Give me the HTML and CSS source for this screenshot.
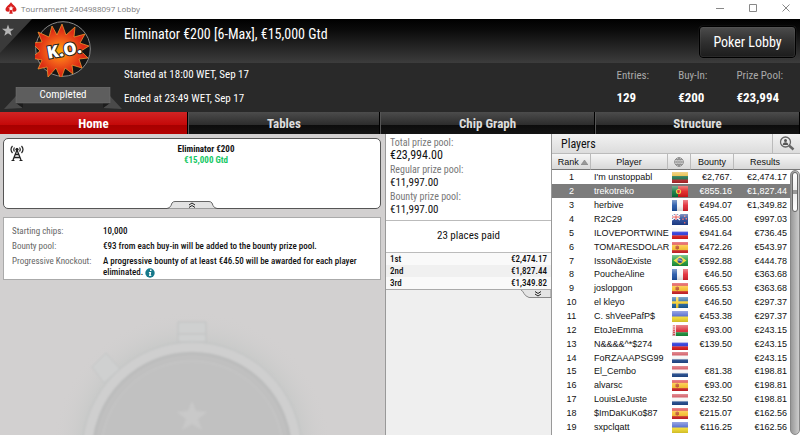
FILE: index.html
```html
<!DOCTYPE html>
<html lang="en">
<head>
<meta charset="UTF-8">
<meta name="viewport" content="width=device-width, initial-scale=1.0">
<title>Tournament 2404988097 Lobby</title>
<link rel="stylesheet" href="styles.css">
</head>
<body>

<!-- flags -->
<svg class="defs" aria-hidden="true">
  <linearGradient id="gloss" x1="0" y1="0" x2="0" y2="1">
    <stop offset="0" stop-color="#fff" stop-opacity=".45"/>
    <stop offset=".5" stop-color="#fff" stop-opacity=".1"/>
    <stop offset="1" stop-color="#000" stop-opacity=".15"/>
  </linearGradient>
  <symbol id="lt" viewBox="0 0 16 11"><path fill="#e8b52c" d="M0 0h16v4H0z"/><path fill="#1d7048" d="M0 4h16v4H0z"/><path fill="#b8282c" d="M0 7.5h16V11H0z"/><path fill="url(#gloss)" d="M0 0h16v11H0z"/></symbol>
  <symbol id="pt" viewBox="0 0 16 11"><path fill="#e01818" d="M0 0h16v11H0z"/><path fill="#08743a" d="M0 0h6v11H0z"/><circle cx="6.5" cy="5.5" r="2.6" fill="#e9cf3a"/><path fill="#d22" d="M5.2 4h2.6v2.2L6.5 7.5 5.2 6.2z"/><path fill="url(#gloss)" d="M0 0h16v11H0z"/></symbol>
  <symbol id="fr" viewBox="0 0 16 11"><path fill="#f4f4f4" d="M0 0h16v11H0z"/><path fill="#1b50a4" d="M0 0h5v11H0z"/><path fill="#e0202c" d="M11 0h5v11h-5z"/><path fill="url(#gloss)" d="M0 0h16v11H0z"/></symbol>
  <symbol id="nz" viewBox="0 0 16 11"><path fill="#1d3f91" d="M0 0h16v11H0z"/><path stroke="#fff" stroke-width="1.5" d="M0 0l8 6M8 0L0 6"/><path stroke="#fff" stroke-width="2" d="M4 0v6M0 3h8"/><path stroke="#d22" d="M4 0v6M0 3h8"/><path fill="#e66" d="M12 1.5h1.4v1.4H12zM10.3 4.5h1.4v1.4h-1.4zM13.6 4h1.4v1.4h-1.4zM12 8h1.4v1.4H12z"/><path fill="url(#gloss)" d="M0 0h16v11H0z"/></symbol>
  <symbol id="ru" viewBox="0 0 16 11"><path fill="#f4f4f4" d="M0 0h16v4H0z"/><path fill="#2434d8" d="M0 3.6h16v4H0z"/><path fill="#e41c1c" d="M0 7.4h16V11H0z"/><path fill="url(#gloss)" d="M0 0h16v11H0z"/></symbol>
  <symbol id="es" viewBox="0 0 16 11"><path fill="#d9252a" d="M0 0h16v11H0z"/><path fill="#f8c02c" d="M0 2.8h16v5.4H0z"/><path fill="#c0522a" d="M3.5 4h1v3h-1zM6 4h1v3H6zM4.5 3.5H6v4H4.5z"/><path fill="url(#gloss)" d="M0 0h16v11H0z"/></symbol>
  <symbol id="br" viewBox="0 0 16 11"><path fill="#1f9a3c" d="M0 0h16v11H0z"/><path fill="#f2dc2c" d="M8 1l6.5 4.5L8 10 1.5 5.5z"/><circle cx="8" cy="5.5" r="2.5" fill="#23408e"/><path stroke="#dfe8f5" stroke-width=".7" fill="none" d="M5.7 5q2.5-.5 4.6 1.3"/><path fill="url(#gloss)" d="M0 0h16v11H0z"/></symbol>
  <symbol id="se" viewBox="0 0 16 11"><path fill="#1c62a0" d="M0 0h16v11H0z"/><path fill="#f6d02c" d="M4 0h2.4v11H4zM0 4.3h16v2.4H0z"/><path fill="url(#gloss)" d="M0 0h16v11H0z"/></symbol>
  <symbol id="ua" viewBox="0 0 16 11"><path fill="#4660cc" d="M0 0h16v6H0z"/><path fill="#f4dc2c" d="M0 5.5h16V11H0z"/><path fill="url(#gloss)" d="M0 0h16v11H0z"/></symbol>
  <symbol id="by" viewBox="0 0 16 11"><path fill="#d82430" d="M0 0h16v7.5H0z"/><path fill="#18943c" d="M0 7.3h16V11H0z"/><path fill="#f3dada" d="M0 0h4v11H0z"/><path stroke="#d82430" stroke-width="1.6" stroke-dasharray="1.5 .7" d="M2 0v11"/><path fill="url(#gloss)" d="M0 0h16v11H0z"/></symbol>
  <symbol id="nl" viewBox="0 0 16 11"><path fill="#c8303c" d="M0 0h16v4H0z"/><path fill="#f6f6f6" d="M0 3.5h16v4H0z"/><path fill="#224c92" d="M0 7.4h16V11H0z"/><path fill="url(#gloss)" d="M0 0h16v11H0z"/></symbol>
</svg>

<div class="window">
  <div class="titlebar">
    <svg class="app-icon" viewBox="0 0 12 12"><path fill="#d81e1e" d="M6 0C7 2.5 11.5 4.5 11.5 7.5 11.5 9.8 8.5 10.3 7 9l.8 2.8H4.2L5 9C3.5 10.3.5 9.8.5 7.5.5 4.5 5 2.5 6 0z"/><path fill="#fff" d="M6 3.5l.8 1.9 2 .1-1.6 1.3.6 2L6 7.7 4.2 8.8l.6-2-1.6-1.3 2-.1z"/></svg>
    <span class="caption">Tournament 2404988097 Lobby</span>
    <div class="win-buttons">
      <button aria-label="Minimize"><svg viewBox="0 0 8 8"><path d="M0 4.5h8"/></svg></button>
      <button aria-label="Maximize"><svg viewBox="0 0 8 8"><path d="M.5.5h7v7h-7z"/></svg></button>
      <button aria-label="Close"><svg viewBox="0 0 8 8"><path d="M.5.5l7 7M7.5.5l-7 7"/></svg></button>
    </div>
  </div>

  <header class="header">
    <div class="badge">
      <svg class="star" viewBox="0 0 32 34"><path fill="#3a3a3a" d="M0 0h32L0 34z"/><path fill="#b4b4b4" d="M8 5.5l1.5 4.2 4.5.1-3.6 2.7 1.3 4.3L8 14.3l-3.7 2.5 1.3-4.3L2 9.8l4.5-.1z"/></svg>
      <svg class="ko" viewBox="0 0 56 56">
        <defs><radialGradient id="fire"><stop offset="0" stop-color="#ffa800"/><stop offset=".4" stop-color="#f4641a"/><stop offset=".8" stop-color="#dc2c14"/></radialGradient></defs>
        <circle cx="28" cy="28" r="27.3" fill="#141414" stroke="#888"/>
        <path fill="url(#fire)" stroke="#f8a030" stroke-width=".7" d="M17 5l5 9 5-11 4 11 9-8-1 10 11-3-5 9 9 3-8 5 7 7-9 1 3 9-10-3 1 9-8-6-4 11-5-11-8 9-1-10-9 2 4-9-11-2 9-7-8-8 10-1-4-10 11 5z"/>
        <g transform="rotate(-10 28 28)"><text x="29" y="35" text-anchor="middle" class="ko-text">K.O.</text></g>
      </svg>
      <div class="ribbon">
        <svg viewBox="0 0 118 22" preserveAspectRatio="none"><path fill="#4a4a4a" d="M0 22L12 9v7l7 5zM118 22L106 9v7l-7 5z"/><path fill="#1c1c1c" d="M12 16h7v5zM106 16h-7v5z"/><path fill="#5e5e5e" stroke="#777" stroke-width=".5" d="M12 0h94v16H12z"/></svg>
        <span>Completed</span>
      </div>
    </div>
    <div class="summary">
      <h1>Eliminator €200 [6-Max], €15,000 Gtd</h1>
      <p>Started at 18:00 WET, Sep 17</p>
      <p>Ended at 23:49 WET, Sep 17</p>
    </div>
    <div class="side">
      <button class="lobby-btn">Poker Lobby</button>
      <dl class="stats">
        <div><dt>Entries:</dt><dd>129</dd></div>
        <div><dt>Buy-In:</dt><dd>€200</dd></div>
        <div><dt>Prize Pool:</dt><dd>€23,994</dd></div>
      </dl>
    </div>
  </header>

  <nav class="tabs">
    <button class="tab active">Home</button>
    <button class="tab">Tables</button>
    <button class="tab">Chip Graph</button>
    <button class="tab">Structure</button>
  </nav>

  <main class="content">
    <section class="left">
      <div class="card">
        <svg class="antenna" viewBox="0 0 14 16" fill="none" stroke="#222"><path d="M4.5 2.5q-1.5 2 0 4M9.5 2.5q1.5 2 0 4M2.5 1q-3 3.5 0 7M11.5 1q3 3.5 0 7" stroke-width="1.2"/><circle cx="7" cy="4.5" r="1.2" fill="#222"/><path d="M7 5L3 15M7 5l4 10M5.5 9.5h3M4.5 12.5h5" stroke-width="1.3"/><path d="M1.5 15.5h3M9.5 15.5h3"/></svg>
        <strong>Eliminator €200</strong>
        <span class="gtd">€15,000 Gtd</span>
        <button class="handle" aria-label="Collapse"><svg viewBox="0 0 50 8"><path fill="#e2e2e2" stroke="#666" d="M0 7.5Q3 7 4 4.5L5 2Q6 .5 8 .5h34q2 0 3 1.5l1 2.5Q47 7 50 7.5"/><path fill="none" stroke="#222" d="M22 4l3-2 3 2M22 6.5l3-2 3 2"/></svg></button>
      </div>
      <dl class="info">
        <dt>Starting chips:</dt><dd>10,000</dd>
        <dt>Bounty pool:</dt><dd>€93 from each buy-in will be added to the bounty prize pool.</dd>
        <dt>Progressive Knockout:</dt><dd>A progressive bounty of at least €46.50 will be awarded for each player eliminated. <svg class="info-icon" viewBox="0 0 10 10"><circle cx="5" cy="5" r="4.7" fill="#16788a"/><path fill="#fff" d="M5 1.5h1.5V3H5zM4 4h2.2L5.7 7.2h.8l-.3.9H4l.5-3.2H3.8z"/></svg></dd>
      </dl>
      <!-- stopwatch watermark -->
      <svg class="watch" viewBox="0 0 250 115" preserveAspectRatio="xMidYMin slice">
        <defs>
          <filter id="soft"><feGaussianBlur stdDeviation="1"/></filter>
          <radialGradient id="halo"><stop offset=".75" stop-color="#c6c8c7"/><stop offset="1" stop-color="#d2d0d0" stop-opacity="0"/></radialGradient>
        </defs>
        <circle cx="125" cy="130" r="140" fill="url(#halo)"/>
        <g filter="url(#soft)">
          <path fill="#cfd0d0" stroke="#bfc1c1" d="M111 1h28v20h-28z"/>
          <path stroke="#bfc1c1" d="M111 13h28"/>
          <path fill="#cfd0d0" stroke="#c2c4c4" d="M25 46l14-14 14 16-16 14z"/>
          <circle cx="125" cy="131" r="110" fill="#cfcfcf" stroke="#c0c2c2"/>
          <circle cx="125" cy="131" r="99" fill="#c0c0c0" stroke="#b9baba" stroke-width="2"/>
          <circle cx="125" cy="131" r="91" fill="#c1c1c1" stroke="#c9c9c9"/>
          <path fill="#c9c9c9" d="M125 80l4 10 11 1-9 7 4 11-10-6-10 6 4-11-9-7 11-1z"/>
        </g>
      </svg>
    </section>

    <section class="middle">
      <dl class="pools">
        <dt>Total prize pool:</dt><dd class="total">€23,994.00</dd>
        <dt>Regular prize pool:</dt><dd>€11,997.00</dd>
        <dt>Bounty prize pool:</dt><dd>€11,997.00</dd>
      </dl>
      <p class="places">23 places paid</p>
      <table class="payouts">
        <tr><th>1st</th><td>€2,474.17</td></tr>
        <tr><th>2nd</th><td>€1,827.44</td></tr>
        <tr><th>3rd</th><td>€1,349.82</td></tr>
      </table>
      <button class="more" aria-label="More payouts"><svg viewBox="0 0 30 8"><path fill="#e4e4e4" stroke="#888" d="M0 0q2 1 3 3.500T8 7.500h22V0"/><path fill="none" stroke="#222" d="M14 1.500l3 2 3-2M14 4l3 2 3-2"/></svg></button>
    </section>

    <section class="players">
      <div class="players-head">
        <h2>Players</h2>
        <button aria-label="Find player"><svg viewBox="0 0 16 16" fill="none" stroke="#666"><circle cx="6.5" cy="6" r="5" stroke-width="1.3"/><circle cx="6.5" cy="4.5" r="1.5" fill="#555" stroke="none"/><path fill="#555" stroke="none" d="M3.8 9q0-2.8 2.7-2.8T9.2 9z"/><path d="M10 9.5l4.5 4" stroke-width="2.5"/></svg></button>
      </div>
      <div class="list">
        <table>
          <colgroup><col class="c-rank"><col><col class="c-flag"><col class="c-bounty"><col class="c-results"></colgroup>
          <thead>
            <tr>
              <th>Rank <svg class="sort" viewBox="0 0 7 5"><path fill="#999" stroke="#777" stroke-width=".5" d="M3.5 0L7 5H0z"/></svg></th>
              <th>Player</th>
              <th><svg class="globe" viewBox="0 0 10 10" fill="none" stroke="#888"><circle cx="5" cy="5" r="4.3"/><path stroke-width=".8" d="M5 .5v9M.5 5h9M1.5 2.5h7M1.5 7.5h7M5 .7q-4.5 4.3 0 8.600M5 .7q4.5 4.3 0 8.600"/></svg></th>
              <th>Bounty</th>
              <th>Results</th>
            </tr>
          </thead>
          <tbody>
            <tr><td>1</td><td>I'm unstoppabl</td><td><svg class="flag"><use href="#lt"/></svg></td><td>€2,767.</td><td>€2,474.17</td></tr>
            <tr class="selected"><td>2</td><td>trekotreko</td><td><svg class="flag"><use href="#pt"/></svg></td><td>€855.16</td><td>€1,827.44</td></tr>
            <tr><td>3</td><td>herbive</td><td><svg class="flag"><use href="#fr"/></svg></td><td>€494.07</td><td>€1,349.82</td></tr>
            <tr><td>4</td><td>R2C29</td><td><svg class="flag"><use href="#nz"/></svg></td><td>€465.00</td><td>€997.03</td></tr>
            <tr><td>5</td><td>ILOVEPORTWINE</td><td><svg class="flag"><use href="#ru"/></svg></td><td>€941.64</td><td>€736.45</td></tr>
            <tr><td>6</td><td>TOMARESDOLAR</td><td><svg class="flag"><use href="#es"/></svg></td><td>€472.26</td><td>€543.97</td></tr>
            <tr><td>7</td><td>IssoNãoExiste</td><td><svg class="flag"><use href="#br"/></svg></td><td>€592.88</td><td>€444.78</td></tr>
            <tr><td>8</td><td>PoucheAline</td><td><svg class="flag"><use href="#fr"/></svg></td><td>€46.50</td><td>€363.68</td></tr>
            <tr><td>9</td><td>joslopgon</td><td><svg class="flag"><use href="#es"/></svg></td><td>€665.53</td><td>€363.68</td></tr>
            <tr><td>10</td><td>el kleyo</td><td><svg class="flag"><use href="#se"/></svg></td><td>€46.50</td><td>€297.37</td></tr>
            <tr><td>11</td><td>C. shVeePafP$</td><td><svg class="flag"><use href="#ua"/></svg></td><td>€453.38</td><td>€297.37</td></tr>
            <tr><td>12</td><td>EtoJeEmma</td><td><svg class="flag"><use href="#by"/></svg></td><td>€93.00</td><td>€243.15</td></tr>
            <tr><td>13</td><td>N&amp;&amp;&amp;&amp;^*$274</td><td><svg class="flag"><use href="#ru"/></svg></td><td>€139.50</td><td>€243.15</td></tr>
            <tr><td>14</td><td>FoRZAAAPSG99</td><td><svg class="flag"><use href="#nl"/></svg></td><td></td><td>€243.15</td></tr>
            <tr><td>15</td><td>El_Cembo</td><td><svg class="flag"><use href="#nl"/></svg></td><td>€81.38</td><td>€198.81</td></tr>
            <tr><td>16</td><td>alvarsc</td><td><svg class="flag"><use href="#es"/></svg></td><td>€93.00</td><td>€198.81</td></tr>
            <tr><td>17</td><td>LouisLeJuste</td><td><svg class="flag"><use href="#nl"/></svg></td><td>€232.50</td><td>€198.81</td></tr>
            <tr><td>18</td><td>$ImDaKuKo$87</td><td><svg class="flag"><use href="#es"/></svg></td><td>€215.07</td><td>€162.56</td></tr>
            <tr><td>19</td><td>sxpclqatt</td><td><svg class="flag"><use href="#ua"/></svg></td><td>€116.25</td><td>€162.56</td></tr>
          </tbody>
        </table>
        <div class="scrollbar"><div class="thumb"></div></div>
      </div>
    </section>
  </main>
</div>

</body>
</html>
```

FILE: styles.css
```css
* {
  box-sizing: border-box;
}
body {
  margin: 0;
  overflow: hidden;
  font-family: "Liberation Sans Narrow", "Roboto Condensed", Roboto, sans-serif;
  font-size: 11px;
  background: #d2d0d0;
  color: #111;
}
h1, h2, p, dl, dd {
  margin: 0;
}
button {
  font-family: inherit;
  padding: 0;
  border: none;
  background: none;
  cursor: pointer;
}
svg {
  display: block;
}
.defs {
  position: absolute;
  width: 0;
  height: 0;
}
.window {
  display: flex;
  flex-direction: column;
  height: 100vh;
}

/* title bar */
.titlebar {
  display: flex;
  align-items: center;
  height: 19px;
  padding: 0 10px 3px 5px;
  background: #fff;
}
.app-icon {
  width: 12px;
  height: 12px;
}
.caption {
  margin-left: 4px;
  font: 8px "Open Sans", sans-serif;
  color: #777;
}
.win-buttons {
  display: flex;
  gap: 25px;
  margin-left: auto;
}
.win-buttons svg {
  width: 8px;
  height: 8px;
  fill: none;
  stroke: #888;
}

/* header */
.header {
  display: flex;
  height: 93px;
  background: linear-gradient(#000, #0c0c0c 12px, #3c3c3c 44px, #292929 44px);
  color: #fff;
}
.badge {
  position: relative;
  width: 124px;
}
.star {
  width: 32px;
  height: 34px;
}
.ko {
  position: absolute;
  left: 35px;
  top: 2px;
  width: 56px;
  height: 56px;
}
.ko-text {
  font: 800 17px "Open Sans", sans-serif;
  fill: #fff;
  stroke: #222;
  stroke-width: 2px;
  paint-order: stroke;
}
.ribbon {
  position: absolute;
  left: 4px;
  top: 68px;
  width: 118px;
  height: 22px;
}
.ribbon svg {
  width: 100%;
  height: 100%;
}
.ribbon span {
  position: absolute;
  inset: 0;
  line-height: 16px;
  text-align: center;
}
.summary h1 {
  margin: 6px 0 24px;
  font-size: 14px;
  font-weight: normal;
  line-height: 18px;
}
.summary p {
  margin-bottom: 8px;
  line-height: 16px;
}
.side {
  display: flex;
  flex-direction: column;
  align-items: flex-end;
  margin-left: auto;
}
.lobby-btn {
  width: 97px;
  height: 32px;
  margin: 7px 4px 10px;
  border: 1px solid #000;
  border-radius: 4px;
  background: linear-gradient(#4c4c4c, #303030 50%, #1c1c1c);
  box-shadow: inset 0 0 1px #999, 0 0 1px #555;
  color: #fff;
  font-size: 14px;
}
.stats {
  display: flex;
  gap: 29px;
  margin-right: 17px;
}
.stats dt {
  line-height: 16px;
  color: #aaa;
}
.stats dd {
  margin-top: 5px;
  font-size: 13px;
  font-weight: bold;
  line-height: 18px;
}

/* tabs */
.tabs {
  display: grid;
  grid-template-columns: 188fr 192fr 215fr 205fr;
  height: 22px;
}
.tab {
  border-right: 1px solid #000;
  border-left: 1px solid #555;
  background: linear-gradient(#4c4c4c, #2c2c2c 13px, #0c0c0c 13px, #141414);
  color: #ddd;
  font-size: 13px;
  font-weight: bold;
}
.tab.active {
  border-left: none;
  background: linear-gradient(#d02424, #c40808 13px, #a60000 13px, #b40000);
  color: #fff;
}

/* content */
.content {
  display: grid;
  grid-template-columns: 385fr 167fr 248fr;
  flex: 1;
  min-height: 0;
}
.left {
  display: flex;
  flex-direction: column;
  gap: 8px;
  min-height: 0;
  padding: 4px 4px 0 3px;
  overflow: hidden;
}
.card {
  position: relative;
  display: flex;
  flex-direction: column;
  align-items: center;
  flex: none;
  height: 71px;
  padding: 5px 0 0 28px;
  border: 1px solid #555;
  border-radius: 5px;
  background: #fff;
  font-size: 9px;
  line-height: 11px;
}
.antenna {
  position: absolute;
  left: 6px;
  top: 6px;
  width: 14px;
  height: 16px;
}
.gtd {
  color: #14c864;
  font-weight: bold;
}
.handle {
  position: absolute;
  left: 50%;
  bottom: -1px;
  width: 50px;
  height: 8px;
  margin-left: -25px;
}
.info {
  display: grid;
  grid-template-columns: 91px 1fr;
  row-gap: 4px;
  flex: none;
  padding: 8px 16px 1px 8px;
  border: 1px solid #aaa;
  background: #fff;
  font-size: 9px;
  line-height: 11px;
}
.info dt {
  color: #666;
}
.info dd {
  font-weight: 500;
}
.info-icon {
  display: inline-block;
  width: 10px;
  height: 10px;
  vertical-align: middle;
}
.watch {
  align-self: center;
  flex: none;
  width: 250px;
  height: 115px;
  margin-top: 33px;
  overflow: visible;
}

/* prize pools */
.middle {
  border: solid #999;
  border-width: 0 1px;
  background: #efefef;
}
.pools {
  padding: 2px 4px 3px;
  border-bottom: 1px solid #bbb;
  background: #fff;
}
.pools dt {
  font-size: 10px;
  line-height: 13px;
  color: #777;
}
.pools dd {
  margin-bottom: 1px;
  font-size: 11px;
  line-height: 13px;
}
.pools .total {
  font-size: 12px;
}
.places {
  padding: 7px 0 8px;
  border-bottom: 1px solid #bbb;
  background: #fff;
  font-size: 11px;
  line-height: 16px;
  text-align: center;
}
.payouts {
  width: 100%;
  border-collapse: collapse;
  border-bottom: 1px solid #aaa;
  background: #f9f9f9;
  font-size: 9px;
  line-height: 12px;
}
.payouts tr:nth-child(2) {
  background: #f0f0f0;
}
.payouts th, .payouts td {
  padding: 0 4px;
  font-weight: 500;
  text-align: left;
}
.payouts td {
  text-align: right;
}
.more {
  display: block;
  width: 30px;
  height: 8px;
  margin-left: auto;
}

/* players */
.players {
  display: flex;
  flex-direction: column;
  min-height: 0;
  background: #fff;
}
.players-head {
  display: flex;
  justify-content: space-between;
  height: 19px;
  background: linear-gradient(#f2f2f2, #dcdcdc);
}
.players-head h2 {
  padding-left: 9px;
  font-size: 12px;
  font-weight: normal;
  line-height: 20px;
}
.players-head button {
  width: 28px;
  padding: 2px 6px;
  border-left: 1px solid #bbb;
}
.players-head svg {
  width: 16px;
  height: 16px;
}
.list {
  position: relative;
  flex: 1;
  min-height: 0;
  overflow: hidden;
  font-family: "Liberation Sans", Arial, sans-serif;
  font-size: 9px;
}
.list table {
  width: 100%;
  table-layout: fixed;
  border-spacing: 0;
}
.c-rank { width: 39px; }
.c-flag { width: 23px; }
.c-bounty { width: 43px; }
.c-results { width: 66px; }
.list th {
  height: 17px;
  padding: 0;
  border: solid #bbb;
  border-width: 1px 1px 1px 0;
  border-bottom-color: #777;
  background: linear-gradient(#f6f6f6, #d8d8d8);
  font-weight: normal;
  white-space: nowrap;
}
.list th:first-child {
  padding-left: 4px;
}
.list th:last-child {
  padding-right: 4px;
  border-right: none;
}
.list td {
  height: 14px;
  padding: 0;
  line-height: 12px;
  white-space: nowrap;
}
.list tr:nth-child(7n) td {
  height: 13px;
}
.list td:nth-child(1) {
  text-align: center;
}
.list td:nth-child(2) {
  padding-left: 3px;
}
.list td:nth-child(4) {
  padding-right: 2px;
  text-align: right;
}
.list td:nth-child(5) {
  padding-right: 13px;
  text-align: right;
}
.list .selected {
  background: #7c7c7c;
  color: #fff;
}
.sort {
  display: inline-block;
  width: 7px;
  height: 5px;
}
.globe {
  width: 10px;
  height: 10px;
  margin: 0 auto;
}
.flag {
  width: 16px;
  height: 11px;
  margin-left: 4px;
}
.scrollbar {
  position: absolute;
  top: 17px;
  right: 0;
  bottom: 0;
  width: 10px;
  padding: 1px;
  border: 1px solid #888;
  border-radius: 5px;
  background: linear-gradient(90deg, #999, #ccc);
}
.thumb {
  height: 40px;
  border: 1px solid #666;
  border-radius: 4px;
  background: linear-gradient(#fff, #eee 45%, #999 45%, #999 55%, #eee 55%, #fff);
}
```
